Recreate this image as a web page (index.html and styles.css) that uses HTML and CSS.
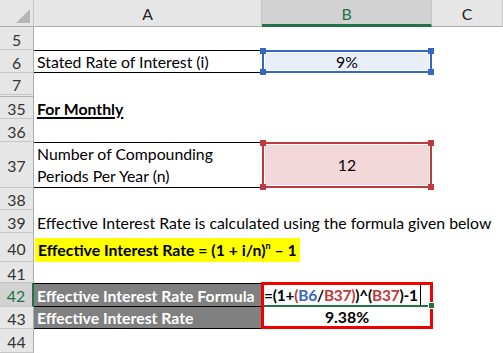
FILE: index.html
```html
<!DOCTYPE html>
<html>
<head>
<meta charset="utf-8">
<link rel="stylesheet" href="styles.css">
</head>
<body>
<div class="sheet">
  <div class="corner"><span class="tri"></span></div>
  <div class="colh">A</div>
  <div class="colh sel">B</div>
  <div class="colh">C</div>

  <div class="rowh">5</div><div class="cell"></div><div class="cell"></div><div class="cell"></div>

  <div class="rowh">6</div>
  <div class="cell ruled">Stated Rate of Interest (i)</div>
  <div class="cell range blue">9%<span class="h tl"></span><span class="h tr"></span><span class="h bl"></span><span class="h br"></span></div>
  <div class="cell"></div>

  <div class="rowh">7</div><div class="cell"></div><div class="cell"></div><div class="cell"></div>

  <div class="rowh split"></div><div class="cell"></div><div class="cell"></div><div class="cell"></div>

  <div class="rowh">35</div><div class="cell"><span class="title">For Monthly</span></div><div class="cell"></div><div class="cell"></div>

  <div class="rowh">36</div><div class="cell"></div><div class="cell"></div><div class="cell"></div>

  <div class="rowh">37</div>
  <div class="cell ruled wrap">Number of Compounding<br>Periods Per Year (n)</div>
  <div class="cell range red">12<span class="h tl"></span><span class="h tr"></span><span class="h bl"></span><span class="h br"></span></div>
  <div class="cell"></div>

  <div class="rowh">38</div><div class="cell"></div><div class="cell"></div><div class="cell"></div>

  <div class="rowh">39</div><div class="cell spill">Effective Interest Rate is calculated using the formula given below</div><div class="cell"></div><div class="cell"></div>

  <div class="rowh">40</div><div class="cell spill"><span class="hl">Effective Interest Rate = (1 + i/n)<sup>n</sup> – 1</span></div><div class="cell"></div><div class="cell"></div>

  <div class="rowh">41</div><div class="cell"></div><div class="cell"></div><div class="cell"></div>

  <div class="rowh active">42</div>
  <div class="cell dark top">Effective Interest Rate Formula</div>
  <div class="result">
    <div class="formula"><span>=(1+</span><span class="cr">(</span><span class="cb">B6</span><span>/</span><span class="cr">B37)</span><span>)^(</span><span class="cr">B37</span><span>)-1</span><span class="caret"></span><span class="fill"></span></div>
    <div class="value">9.38%</div>
  </div>
  <div class="cell"></div>

  <div class="rowh">43</div>
  <div class="cell dark">Effective Interest Rate</div>
  <div class="cell"></div>

  <div class="rowh">44</div><div class="cell"></div><div class="cell"></div><div class="cell"></div>
</div>
</body>
</html>
```

FILE: styles.css
```css
html, body {
  margin: 0;
  padding: 0;
  background: #fff;
}

.sheet {
  display: grid;
  grid-template-columns: 34px 228px 170px 71px;
  grid-template-rows: 27px 23px 23px 22px 2px 22px 23px 46px 22px 23px 29px 21px 24px 22px 24px;
  width: 503px;
  height: 353px;
  overflow: hidden;
  font-family: Lato, "Open Sans", sans-serif;
  font-size: 15.8px;
  color: #000;
}

.corner {
  position: relative;
  background: #e6e6e6;
  border-right: 1px solid #c6c6c6;
  border-bottom: 1px solid #ababab;
  box-sizing: border-box;
}

.tri {
  position: absolute;
  right: 3px;
  bottom: 3px;
  width: 0;
  height: 0;
  border-left: 14px solid transparent;
  border-bottom: 14px solid #b5b5b5;
}

.colh {
  background: #e6e6e6;
  border-right: 1px solid #c6c6c6;
  border-bottom: 1px solid #ababab;
  box-sizing: border-box;
  display: flex;
  align-items: center;
  justify-content: center;
  color: #222;
  padding-top: 1px;
}

.colh.sel {
  background: #d2d2d2;
  color: #217346;
  border-bottom: 3px solid #217346;
  padding-top: 3px;
}

.rowh {
  background: #e6e6e6;
  border-right: 1px solid #ababab;
  border-bottom: 1px solid #c6c6c6;
  box-sizing: border-box;
  display: flex;
  align-items: center;
  justify-content: center;
  color: #333;
  padding-top: 2px;
}

.rowh.split {
  padding: 0;
  border-bottom: 1px solid #b0b0b0;
}

.rowh.active {
  background: #d2d2d2;
  color: #217346;
  border-right: 2px solid #217346;
}

.cell {
  box-sizing: border-box;
  display: flex;
  align-items: flex-end;
  padding: 0 3px 1px;
  white-space: nowrap;
  min-width: 0;
}

.spill {
  overflow: visible;
}

.ruled {
  border-top: 1px solid #000;
  border-bottom: 1px solid #000;
}

.wrap {
  white-space: normal;
  line-height: 22px;
  padding-bottom: 0;
}

.title {
  font-weight: bold;
  text-decoration: underline;
  text-decoration-thickness: 2px;
  text-underline-offset: 2px;
}

.range {
  position: relative;
  justify-content: center;
  align-items: center;
  box-shadow: inset 0 0 0 1px #fff;
}

.range.blue {
  background: #e8eff9;
  border: 2px solid #3468c1;
}

.range.red {
  background: #f4d7d9;
  border: 2px solid #be3a3f;
}

.h {
  position: absolute;
  width: 6px;
  height: 6px;
}

.blue .h { background: #3468c1; }
.red .h { background: #be3a3f; }

.h.tl { left: -4px; top: -4px; }
.h.tr { right: -4px; top: -4px; }
.h.bl { left: -4px; bottom: -4px; }
.h.br { right: -4px; bottom: -4px; }

.hl {
  display: inline-block;
  background: #ffff00;
  font-weight: bold;
  height: 24px;
  line-height: 24px;
  padding: 0 3px;
  margin-left: -2px;
  margin-bottom: -1px;
}

.hl sup {
  font-size: 9px;
  vertical-align: 7px;
  line-height: 0;
}

.dark {
  background: #808080;
  color: #fff;
  font-weight: bold;
  border-bottom: 1px solid #000;
}

.dark.top {
  border-top: 1px solid #000;
}

.result {
  grid-column: 3;
  grid-row: 13 / span 2;
  margin: -1px -1px 0 -1px;
  border: 3px solid #f00000;
  display: flex;
  flex-direction: column;
  font-weight: bold;
  position: relative;
  z-index: 1;
}

.formula {
  height: 22px;
  display: flex;
  align-items: center;
  white-space: nowrap;
  font-size: 15.4px;
  letter-spacing: -0.2px;
  border-bottom: 2px solid #217346;
  position: relative;
  box-sizing: border-box;
}

.formula span {
  flex-shrink: 0;
}

.cr { color: #c0393b; }
.cb { color: #3468c1; }

.formula .caret {
  display: inline-block;
  width: 1px;
  height: 20px;
  background: #000;
  margin-left: 2px;
}

.formula .fill {
  position: absolute;
  right: -5px;
  bottom: -4px;
  width: 5px;
  height: 5px;
  background: #217346;
  border: 1px solid #fff;
}

.value {
  flex: 1;
  display: flex;
  align-items: center;
  justify-content: center;
}
```
